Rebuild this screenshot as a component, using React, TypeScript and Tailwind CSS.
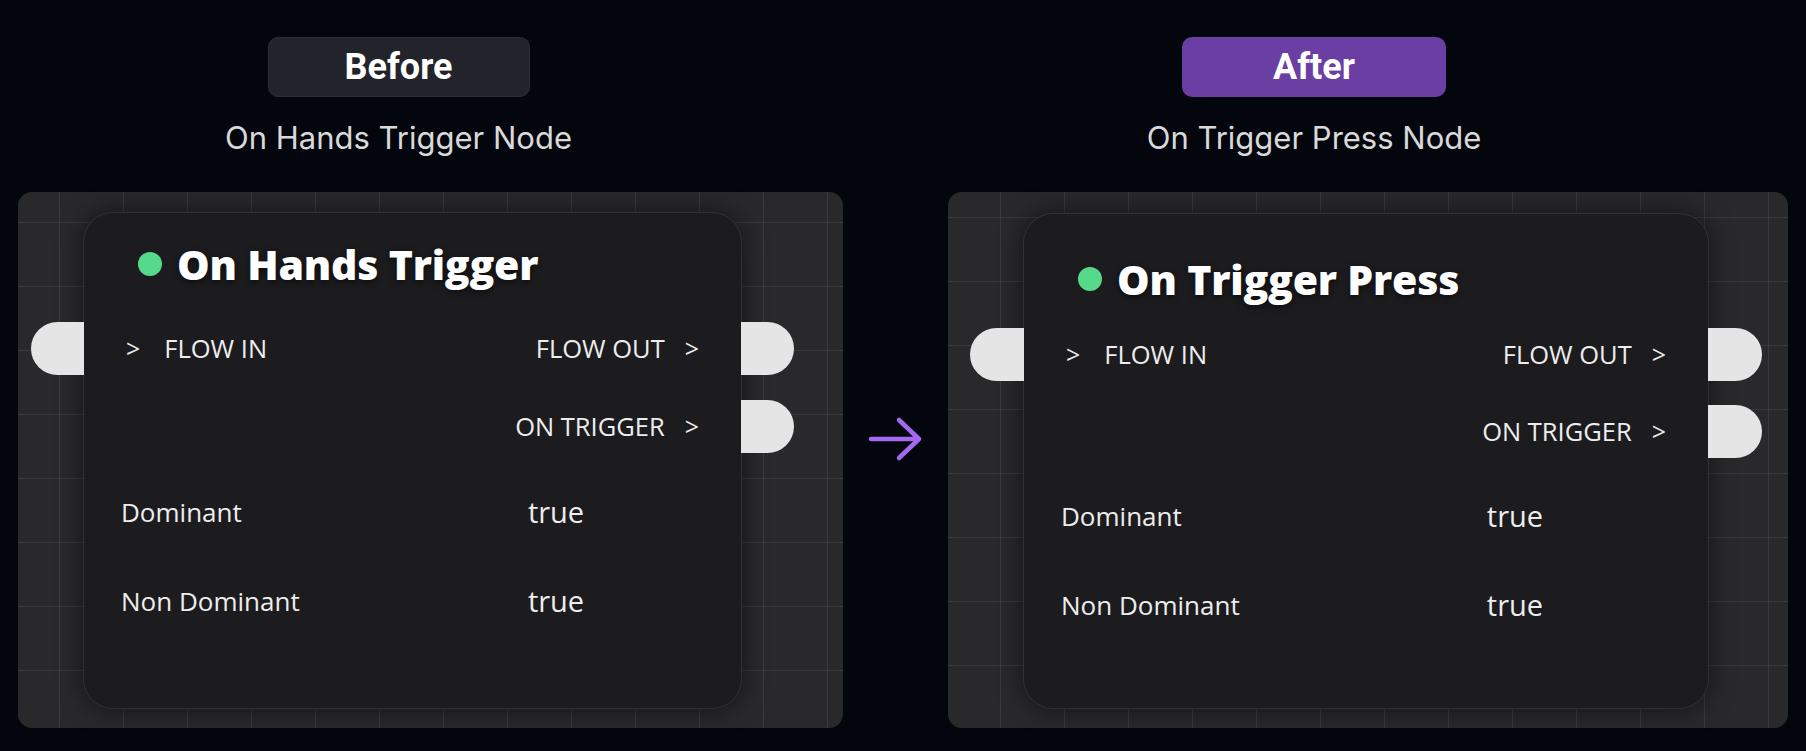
import React from "react";

type Row = { label: string; value: string };

const rows: Row[] = [
  { label: "Dominant", value: "true" },
  { label: "Non Dominant", value: "true" },
];

function ArrowGlyph() {
  return (
    <svg width="58" height="46" viewBox="0 0 58 46" fill="none">
      <path
        d="M4 23 H52 M32 4 L52 23 L32 42"
        stroke="#a468f2"
        strokeWidth="4.5"
        strokeLinecap="round"
        strokeLinejoin="round"
      />
    </svg>
  );
}

function Chevron() {
  return <span className="text-[25px] leading-none text-[#ececec]">&gt;</span>;
}

function NodeCard({
  title,
  size,
  ports,
  titleBox,
  flowGap,
  triggerGap,
  domGap,
  nonGap,
}: {
  title: string;
  size: string;
  ports: string[];
  titleBox: string;
  flowGap: string;
  triggerGap: string;
  domGap: string;
  nonGap: string;
}) {
  return (
    <div
      className={`relative rounded-[30px] border border-[#323236] bg-[#1c1c1f] shadow-[0_0_24px_rgba(0,0,0,0.55)] px-10 font-['Open_Sans',sans-serif] text-[#ededed] ${size}`}
    >
      {/* ports sticking out of the node edge */}
      <div className={`absolute h-[53px] rounded-l-full bg-[#e5e5e5] ${ports[0]}`} />
      <div className={`absolute h-[53px] rounded-r-full bg-[#e5e5e5] ${ports[1]}`} />
      <div className={`absolute h-[53px] rounded-r-full bg-[#e5e5e5] ${ports[2]}`} />

      <div className={`flex items-center gap-[15px] ml-[14px] ${titleBox}`}>
        <span className="w-[24px] h-[24px] rounded-full bg-[#57d98b]" />
        <span className="text-[41px] font-extrabold leading-none text-white tracking-[-0.2px] [text-shadow:0_2px_6px_rgba(0,0,0,0.6)]">
          {title}
        </span>
      </div>

      <div className={`h-[53px] flex items-center justify-between ${flowGap}`}>
        <div className="flex items-center gap-[24px] pl-[2px]">
          <Chevron />
          <span className="text-[25.5px] leading-none">FLOW IN</span>
        </div>
        <div className="flex items-center gap-[20px] pr-[2px]">
          <span className="text-[25.5px] leading-none">FLOW OUT</span>
          <Chevron />
        </div>
      </div>

      <div className={`h-[53px] flex items-center justify-end ${triggerGap}`}>
        <div className="flex items-center gap-[20px] pr-[2px]">
          <span className="text-[25.5px] leading-none">ON TRIGGER</span>
          <Chevron />
        </div>
      </div>

      {rows.map((r, i) => (
        <div
          key={r.label}
          className={`h-[53px] grid grid-cols-[7fr_3fr] items-center ${i === 0 ? domGap : nonGap}`}
        >
          <span className="text-[26px] leading-none -ml-[3px]">{r.label}</span>
          <span className="text-[29px] leading-none">{r.value}</span>
        </div>
      ))}
    </div>
  );
}

const gridBg =
  "bg-[#29292c] bg-[linear-gradient(to_right,rgba(255,255,255,0.08)_1px,transparent_1px),linear-gradient(to_bottom,rgba(255,255,255,0.08)_1px,transparent_1px)] bg-[size:64px_64px]";

export default function App() {
  return (
    <div className="w-full h-[751px] overflow-hidden bg-[#04060e] flex pl-[18px] font-['Inter',sans-serif]">
      {/* before */}
      <div className="w-[825px] flex flex-col">
        <div className="flex flex-col items-center pr-[64px] pt-[37px]">
          <div className="w-[262px] h-[60px] rounded-[10px] bg-[#23232c] border border-[#2d2d37] flex items-center justify-center">
            <span className="text-[36px] font-bold text-white leading-none font-['Roboto',sans-serif]">Before</span>
          </div>
          <p className="mt-[23px] text-[31px] leading-[36px] text-[#d9d9d9]">On Hands Trigger Node</p>
        </div>
        <div className={`mt-[36px] h-[536px] rounded-[14px] pt-[20px] pl-[65px] bg-[position:41px_30px] ${gridBg}`}>
          <NodeCard
            title="On Hands Trigger"
            size="w-[659px] h-[497px]"
            ports={[
              "left-[-53px] top-[109px] w-[53px]",
              "right-[-53px] top-[109px] w-[53px]",
              "right-[-53px] top-[187px] w-[53px]",
            ]}
            titleBox="h-[40px] mt-[31px]"
            flowGap="mt-[38px]"
            triggerGap="mt-[25px]"
            domGap="mt-[32px]"
            nonGap="mt-[36px]"
          />
        </div>
      </div>

      {/* arrow */}
      <div className="w-[105px] flex justify-center pt-[416px]">
        <div className="h-[46px]">
          <ArrowGlyph />
        </div>
      </div>

      {/* after */}
      <div className="w-[840px] flex flex-col">
        <div className="flex flex-col items-center pr-[108px] pt-[37px]">
          <div className="w-[264px] h-[60px] rounded-[10px] bg-[#6a3ea2] flex items-center justify-center">
            <span className="text-[36px] font-bold text-white leading-none font-['Roboto',sans-serif]">After</span>
          </div>
          <p className="mt-[23px] text-[31px] leading-[36px] text-[#d9d9d9]">On Trigger Press Node</p>
        </div>
        <div className={`mt-[36px] h-[536px] rounded-[14px] pt-[21px] pl-[75px] bg-[position:52px_25px] ${gridBg}`}>
          <NodeCard
            title="On Trigger Press"
            size="w-[686px] h-[496px]"
            ports={[
              "left-[-54px] top-[114px] w-[54px]",
              "right-[-54px] top-[114px] w-[54px]",
              "right-[-54px] top-[191px] w-[54px]",
            ]}
            titleBox="h-[40px] mt-[45px]"
            flowGap="mt-[29px]"
            triggerGap="mt-[24px]"
            domGap="mt-[31px]"
            nonGap="mt-[36px]"
          />
        </div>
      </div>
    </div>
  );
}
